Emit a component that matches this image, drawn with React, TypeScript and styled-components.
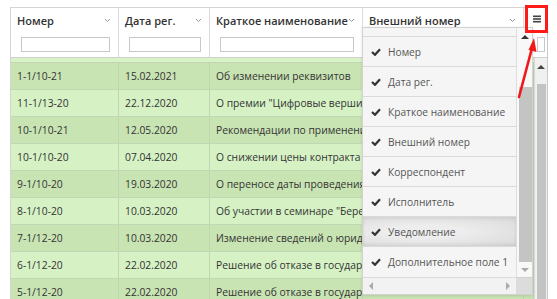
import React from 'react'
import styled, { createGlobalStyle, css } from 'styled-components'

const GlobalStyle = createGlobalStyle`
  html, body {
    margin: 0;
    padding: 0;
    background: #fff;
    overflow: hidden;
  }
  body {
    font-family: "Open Sans", "Liberation Sans", sans-serif;
    font-size: 11px;
    color: #333;
  }
`

const COLS = '108px 91px 153px 161px 1fr'

const Page = styled.div`
  position: relative;
  width: 557px;
  height: 299px;
  padding: 7px 0 0 10px;
  box-sizing: border-box;
  overflow: hidden;
`

const Grid = styled.div`
  width: 538px;
  height: 310px;
  border: 1px solid #d4d4d4;
  border-right-color: #c8c8c8;
  box-sizing: border-box;
  display: flex;
  flex-direction: column;
  background: #fff;
`

const HeaderRow = styled.div`
  display: grid;
  grid-template-columns: ${COLS};
  height: 49px;
  border-bottom: 1px solid #d0d0d0;
  background: #fff;
`

const HeadCell = styled.div<{ $last?: boolean }>`
  display: flex;
  flex-direction: column;
  border-right: ${p => (p.$last ? 'none' : '1px solid #dcdcdc')};
  min-width: 0;
  overflow: hidden;
`

const HeadTitle = styled.div`
  height: 24px;
  display: flex;
  align-items: center;
  justify-content: space-between;
  padding: 0 7px 0 6px;
  font-weight: 600;
  color: #333;
  white-space: nowrap;
`

const FilterBox = styled.div<{ $narrow?: boolean }>`
  flex: 1;
  display: flex;
  align-items: center;
  padding: ${p => (p.$narrow ? '0 2px 0 13px' : '0 8px 0 10px')};
`

const FilterInput = styled.div`
  width: 100%;
  height: 15px;
  border: 1px solid #c8c8c8;
  background: #fff;
  box-sizing: border-box;
`

const Body = styled.div`
  flex: 1;
  display: flex;
  min-height: 0;
`

const Rows = styled.div`
  flex: 1;
  display: flex;
  flex-direction: column;
`

const TopStrip = styled.div`
  height: 4px;
  background: #d7f3c6;
  border-bottom: 1px solid #c2d6b4;
`

const Row = styled.div<{ $dark: boolean }>`
  display: grid;
  grid-template-columns: ${COLS};
  height: 27px;
  flex: none;
  box-sizing: border-box;
  border-bottom: 1px solid #c3d7b5;
  background: ${p => (p.$dark ? '#c9e4b3' : '#d6f2c5')};
`

const Cell = styled.div`
  display: flex;
  align-items: center;
  padding-left: 6px;
  font-size: 10.3px;
  white-space: nowrap;
  overflow: hidden;
  border-right: 1px solid #c0d4b2;
  color: #333;
`

const OuterScroll = styled.div`
  width: 12px;
  background: #f0f0f0;
  border-left: 1px solid #dcdcdc;
  display: flex;
  flex-direction: column;
  align-items: center;
  padding-top: 7px;
  gap: 15px;
`

const OuterThumb = styled.div`
  width: 9px;
  flex: 1;
  background: #c3c3c3;
`

type Dir = 'up' | 'down' | 'left' | 'right'

const arrow = (dir: Dir, color: string) => {
  switch (dir) {
    case 'up':
      return css`border-left: 4px solid transparent; border-right: 4px solid transparent; border-bottom: 4px solid ${color};`
    case 'down':
      return css`border-left: 4px solid transparent; border-right: 4px solid transparent; border-top: 4px solid ${color};`
    case 'left':
      return css`border-top: 4px solid transparent; border-bottom: 4px solid transparent; border-right: 4px solid ${color};`
    default:
      return css`border-top: 4px solid transparent; border-bottom: 4px solid transparent; border-left: 4px solid ${color};`
  }
}

const Arrow = styled.div<{ $dir: Dir; $color: string }>`
  width: 0;
  height: 0;
  flex: none;
  ${p => arrow(p.$dir, p.$color)}
`

const Popup = styled.div`
  position: absolute;
  left: 362px;
  top: 27px;
  width: 171px;
  height: 268px;
  background: #f5f5f5;
  border: 1px solid #d2d2d2;
  box-sizing: border-box;
  box-shadow: 0 1px 3px rgba(0, 0, 0, 0.12);
  display: grid;
  grid-template-columns: 1fr 16px;
  grid-template-rows: 1fr 17px;
`

const MenuList = styled.div`
  padding-top: 8px;
  display: flex;
  flex-direction: column;
  overflow: hidden;
  min-height: 0;
`

const MenuItem = styled.div<{ $active?: boolean }>`
  height: 30px;
  flex: none;
  box-sizing: border-box;
  border-top: 1px solid #dadada;
  display: flex;
  align-items: center;
  gap: 7px;
  padding-left: 8px;
  font-size: 10.2px;
  color: #555;
  white-space: nowrap;
  ${p =>
    p.$active &&
    css`
      background: radial-gradient(ellipse at 40% 50%, #ededed 30%, #d9d9d9 100%);
      box-shadow: inset 0 2px 3px rgba(0, 0, 0, 0.06), inset 0 -2px 3px rgba(0, 0, 0, 0.06);
    `}
`

const PopScroll = styled.div`
  background: #f8f8f8;
  border-left: 1px solid #dedede;
  display: flex;
  flex-direction: column;
  align-items: center;
  padding: 7px 0 5px;
  min-height: 0;
`

const PopThumb = styled.div`
  width: 13px;
  margin: 48px 0 6px 2px;
  flex: 1;
  background: #c4c4c4;
`

const HScroll = styled.div`
  background: #f2f2f2;
  border-top: 1px solid #dcdcdc;
  display: flex;
  align-items: center;
  justify-content: space-between;
  padding: 0 6px;
`

const Corner = styled.div`
  background: #dcdcdc;
  border-top: 1px solid #d0d0d0;
`

const MenuBox = styled.div`
  position: absolute;
  left: 525px;
  top: 5px;
  width: 23px;
  height: 28px;
  border: 3px solid #ff1a1a;
  box-sizing: border-box;
  display: flex;
  align-items: center;
  justify-content: center;
`

const ArrowLayer = styled.svg`
  position: absolute;
  left: 0;
  top: 0;
  pointer-events: none;
`

const Chevron = () => (
  <svg width="7" height="5" viewBox="0 0 7 5">
    <polyline points="1,1 3.5,3.5 6,1" fill="none" stroke="#999" strokeWidth="1" />
  </svg>
)

const Check = () => (
  <svg width="10" height="8" viewBox="0 0 10 8">
    <polyline points="1,4 4,6.8 9,1.2" fill="none" stroke="#333" strokeWidth="2.2" />
  </svg>
)

const headers = ['Номер', 'Дата рег.', 'Краткое наименование', 'Внешний номер']

const rows = [
  ['1-1/10-21', '15.02.2021', 'Об изменении реквизитов'],
  ['11-1/13-20', '22.12.2020', 'О премии "Цифровые вершины"'],
  ['10-1/10-21', '12.05.2020', 'Рекомендации по применению'],
  ['10-1/10-20', '07.04.2020', 'О снижении цены контракта'],
  ['9-1/10-20', '19.03.2020', 'О переносе даты проведения'],
  ['8-1/10-20', '10.03.2020', 'Об участии в семинаре "Бережливое'],
  ['7-1/12-20', '10.03.2020', 'Изменение сведений о юридическом'],
  ['6-1/12-20', '22.02.2020', 'Решение об отказе в государственной'],
  ['5-1/12-20', '22.02.2020', 'Решение об отказе в государственной']
]

const menuItems = [
  'Номер',
  'Дата рег.',
  'Краткое наименование',
  'Внешний номер',
  'Корреспондент',
  'Исполнитель',
  'Уведомление',
  'Дополнительное поле 1'
]

export default function App() {
  return (
    <Page>
      <GlobalStyle />
      <Grid>
        <HeaderRow>
          {headers.map(h => (
            <HeadCell key={h}>
              <HeadTitle>
                <span>{h}</span>
                <Chevron />
              </HeadTitle>
              <FilterBox>
                <FilterInput />
              </FilterBox>
            </HeadCell>
          ))}
          <HeadCell $last>
            <HeadTitle />
            <FilterBox $narrow>
              <FilterInput />
            </FilterBox>
          </HeadCell>
        </HeaderRow>
        <Body>
          <Rows>
            <TopStrip />
            {rows.map((r, i) => (
              <Row key={i} $dark={i % 2 === 0}>
                <Cell>{r[0]}</Cell>
                <Cell>{r[1]}</Cell>
                <Cell>{r[2]}</Cell>
                <Cell />
                <Cell />
              </Row>
            ))}
          </Rows>
          <OuterScroll>
            <Arrow $dir="up" $color="#444" />
            <OuterThumb />
          </OuterScroll>
        </Body>
      </Grid>

      <Popup>
        <MenuList>
          {menuItems.map(m => (
            <MenuItem key={m} $active={m === 'Уведомление'}>
              <Check />
              <span>{m}</span>
            </MenuItem>
          ))}
        </MenuList>
        <PopScroll>
          <Arrow $dir="up" $color="#333" />
          <PopThumb />
          <Arrow $dir="down" $color="#aaa" />
        </PopScroll>
        <HScroll>
          <Arrow $dir="left" $color="#aaa" />
          <Arrow $dir="right" $color="#aaa" />
        </HScroll>
        <Corner />
      </Popup>

      <MenuBox>
        <svg width="10" height="8" viewBox="0 0 10 8">
          <rect x="1" y="0.5" width="8" height="1.6" fill="#444" />
          <rect x="1" y="3.2" width="8" height="1.6" fill="#444" />
          <rect x="1" y="5.9" width="8" height="1.6" fill="#444" />
        </svg>
      </MenuBox>

      <ArrowLayer width="557" height="299" viewBox="0 0 557 299">
        <line x1="519" y1="97" x2="532" y2="48" stroke="#f21818" strokeWidth="2.6" strokeLinecap="round" />
        <polygon points="534,38 528.5,50 536.5,52" fill="#f21818" />
      </ArrowLayer>
    </Page>
  )
}
